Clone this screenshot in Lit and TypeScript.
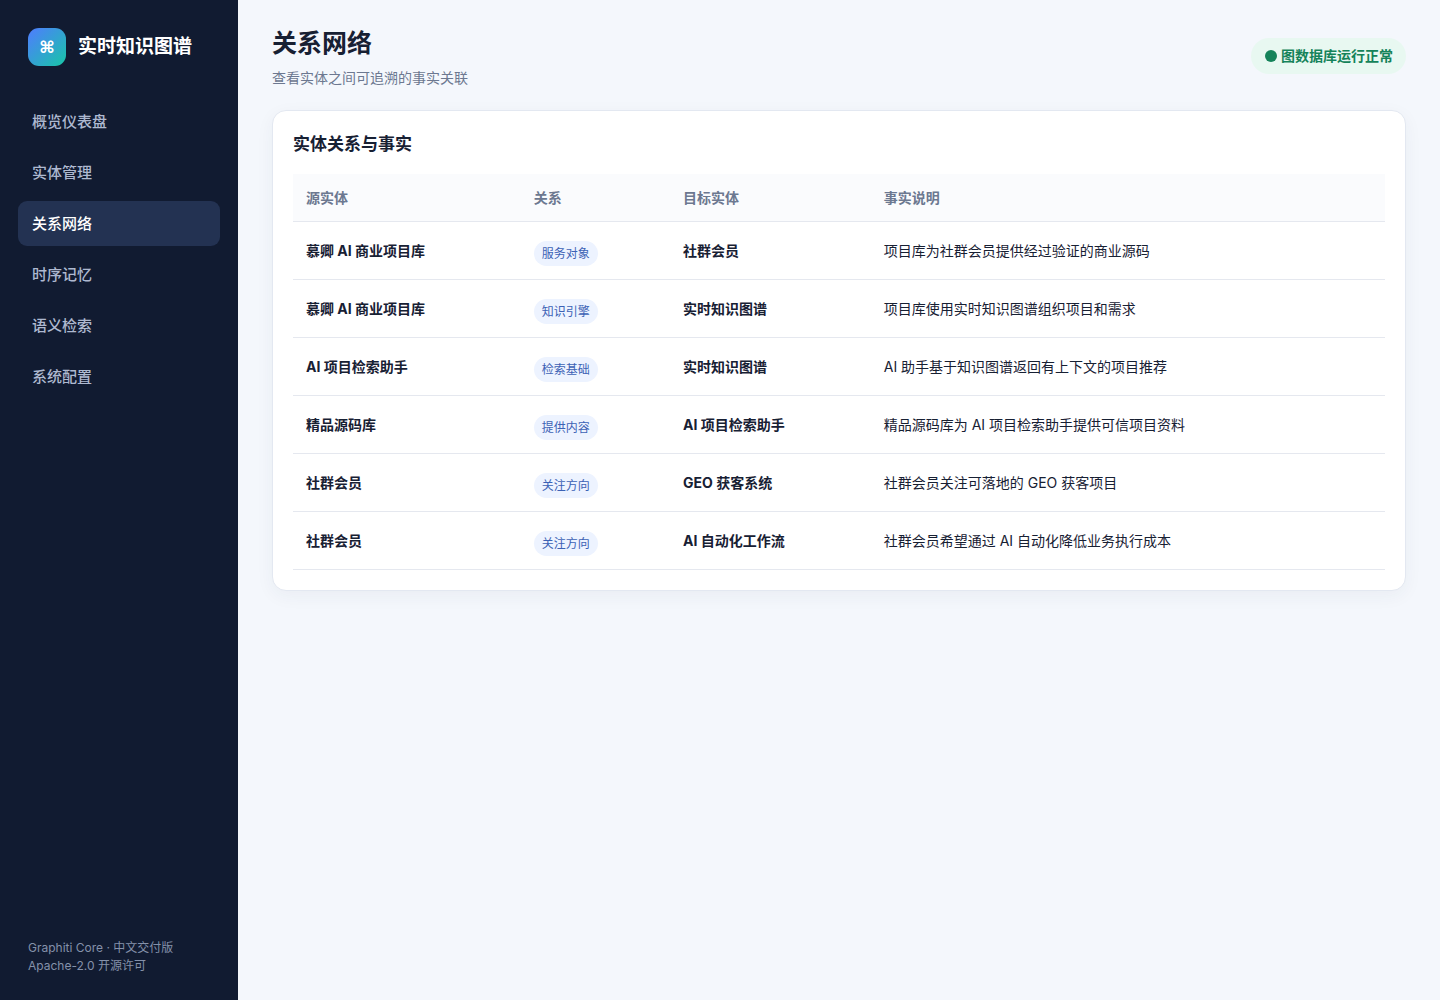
import { LitElement, html, css } from "lit";
import { customElement, state } from "lit/decorators.js";

const NAV = ["概览仪表盘", "实体管理", "关系网络", "时序记忆", "语义检索", "系统配置"];

const FACTS = [
  ["慕卿 AI 商业项目库", "服务对象", "社群会员", "项目库为社群会员提供经过验证的商业源码"],
  ["慕卿 AI 商业项目库", "知识引擎", "实时知识图谱", "项目库使用实时知识图谱组织项目和需求"],
  ["AI 项目检索助手", "检索基础", "实时知识图谱", "AI 助手基于知识图谱返回有上下文的项目推荐"],
  ["精品源码库", "提供内容", "AI 项目检索助手", "精品源码库为 AI 项目检索助手提供可信项目资料"],
  ["社群会员", "关注方向", "GEO 获客系统", "社群会员关注可落地的 GEO 获客项目"],
  ["社群会员", "关注方向", "AI 自动化工作流", "社群会员希望通过 AI 自动化降低业务执行成本"],
];

@customElement("app-root")
export class AppRoot extends LitElement {
  static styles = css`
    :host {
      display: grid;
      grid-template-columns: 238px minmax(0, 1fr);
      min-height: 100vh;
      background: #f4f7fc;
      color: #172033;
      font-family: Inter, "Noto Sans CJK SC", sans-serif;
      font-size: 16px;
    }
    * { box-sizing: border-box; }
    .side {
      display: flex;
      flex-direction: column;
      padding: 28px 18px 25px;
      background: #111b31;
      color: #fff;
    }
    .brand {
      display: flex;
      align-items: center;
      gap: 12px;
      padding: 0 10px;
      margin-bottom: 33px;
      font-size: 19px;
      line-height: 28px;
      font-weight: 700;
    }
    .mark {
      display: grid;
      place-items: center;
      width: 38px;
      height: 38px;
      border-radius: 11px;
      background: linear-gradient(135deg, #4f7cff, #18c6a7);
      font-size: 17px;
    }
    .nav { display: grid; gap: 6px; }
    .item {
      height: 45px;
      padding: 0 14px 2px;
      border: 0;
      border-radius: 9px;
      background: transparent;
      color: #aeb9d0;
      font: inherit;
      font-size: 15px;
      font-weight: 500;
      text-align: left;
      cursor: pointer;
    }
    .item.active { background: #233252; color: #fff; }
    .foot {
      margin-top: auto;
      padding: 0 10px;
      color: #8491aa;
      font-size: 12px;
      line-height: 18px;
    }
    .main { padding: 24px 34px; }
    .head {
      display: flex;
      align-items: center;
      justify-content: space-between;
      margin-bottom: 22px;
    }
    .title { margin: 0; font-size: 25px; line-height: 39px; }
    .sub { margin: 5px 0 0; font-size: 14px; line-height: 20px; color: #6c7890; }
    .status {
      display: flex;
      align-items: center;
      gap: 4px;
      padding: 8px 13px 8px 14px;
      border-radius: 20px;
      background: #e8f8f1;
      color: #15835a;
      font-size: 14px;
      line-height: 20px;
      font-weight: 700;
    }
    .dot { width: 12px; height: 12px; border-radius: 50%; background: currentColor; }
    .card {
      padding: 20px;
      border: 1px solid #e3e8f1;
      border-radius: 14px;
      background: #fff;
      box-shadow: 0 5px 18px rgba(33, 52, 88, 0.05);
    }
    .card-title { margin: 0 0 16px; font-size: 17px; line-height: 27px; }
    .table { width: 100%; border-collapse: collapse; font-size: 14px; line-height: 21px; }
    th, td { padding: 13px; border-bottom: 1px solid #e5e8ef; text-align: left; }
    th { background: #fafbfd; color: #6c7890; }
    .tag {
      display: inline-block;
      margin: 6px 5px 0 0;
      padding: 4px 8px;
      border-radius: 20px;
      background: #edf3ff;
      color: #3c62b5;
      font-size: 12px;
      line-height: 17px;
    }
  `;

  @state() private current = 2;

  render() {
    return html`
      <aside class="side">
        <div class="brand"><span class="mark">⌘</span><span>实时知识图谱</span></div>
        <nav class="nav">
          ${NAV.map((label, i) => html`<button
            class="item ${i === this.current ? "active" : ""}"
            @click=${() => (this.current = i)}
          >${label}</button>`)}
        </nav>
        <div class="foot">Graphiti Core · 中文交付版<br />Apache-2.0 开源许可</div>
      </aside>
      <main class="main">
        <header class="head">
          <div>
            <h1 class="title">关系网络</h1>
            <p class="sub">查看实体之间可追溯的事实关联</p>
          </div>
          <div class="status"><span class="dot"></span>图数据库运行正常</div>
        </header>
        <section class="card">
          <h2 class="card-title">实体关系与事实</h2>
          <table class="table">
            <thead>
              <tr><th>源实体</th><th>关系</th><th>目标实体</th><th>事实说明</th></tr>
            </thead>
            <tbody>
              ${FACTS.map(([from, rel, to, note]) => html`<tr>
                <td><b>${from}</b></td>
                <td><span class="tag">${rel}</span></td>
                <td><b>${to}</b></td>
                <td>${note}</td>
              </tr>`)}
            </tbody>
          </table>
        </section>
      </main>
    `;
  }
}
